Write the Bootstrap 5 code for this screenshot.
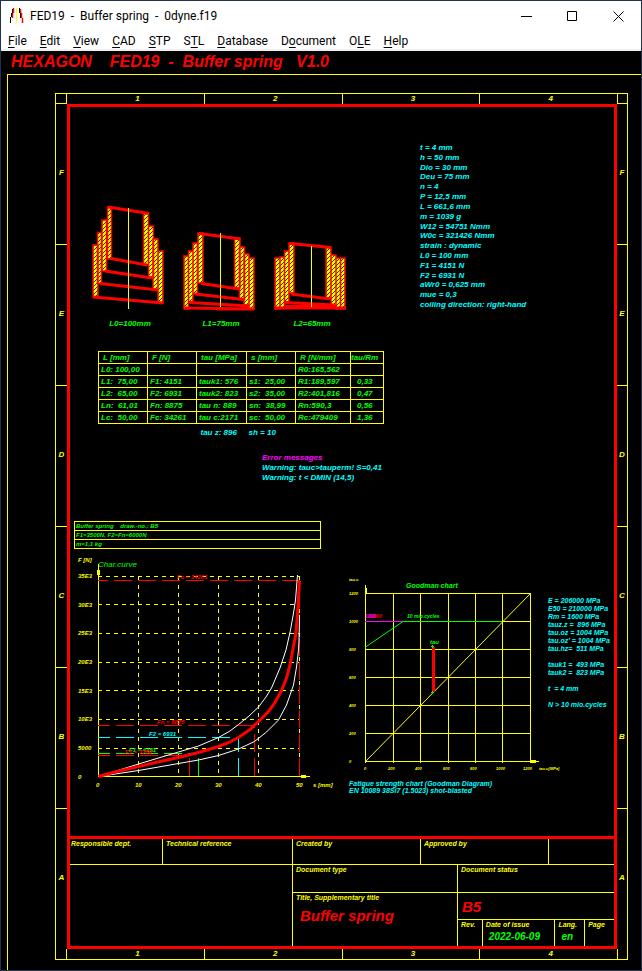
<!DOCTYPE html>
<html lang="en">
<head>
<meta charset="utf-8">
<meta name="viewport" content="width=device-width, initial-scale=1">
<title>FED19 - Buffer spring - 0dyne.f19</title>
<link href="https://cdn.jsdelivr.net/npm/bootstrap@5.3.0/dist/css/bootstrap.min.css" rel="stylesheet">
<style>
  :root { --y: #ff0; --r: #f00; --g: #0f0; --c: #0ff; --m: #f0f; }
  body { background: #000; font-family: "Liberation Sans", Arial, sans-serif; }
  .app-window { border: 1px solid #24314f; min-height: 100vh; }
  .chrome { background: #fff; color: #000; font: 12px/16px Roboto, "Segoe UI", sans-serif; border-bottom: 2px solid #f0f0f0; }
  .titlebar { height: 30px; padding-left: 8px; }
  .app-title { white-space: pre; margin-left: 6px; }
  .win-btn { width: 46px; height: 30px; border: 0; background: none; padding: 0; line-height: 0; }
  .menus { height: 18px; padding: 2px 0 0 7px; gap: 13px; }
  .menus button { border: 0; background: none; padding: 0; color: #000; }
  .menus u { text-underline-offset: 2px; }
  .cad { font-weight: 700; font-style: italic; font-size: 8px; line-height: 10px; color: var(--y); }
  .banner { font-size: 16px; line-height: 22px; color: var(--r); padding-left: 10px; white-space: pre; margin: 0; font-weight: 700; }
  .paper { border: solid var(--y); border-width: 1px 0 0 1px; margin: 1px 0 0 6px; padding: 18px 13px 10px 47px; }
  .sheet { display: grid; grid-template: 10px auto 10px / 11px 1fr 10px; border: 1px solid var(--y); }
  .ruler > div { flex: 1 1 0; display: flex; align-items: center; justify-content: center; }
  .ruler-x > div { padding-left: 4px; }
  .ruler-x > div + div { border-left: 1px solid var(--y); }
  .ruler-y > div { padding-bottom: 2px; }
  .ruler-y > div + div { border-top: 1px solid var(--y); }
  .corner-r { border-right: 1px solid var(--y); }
  .corner-l { border-left: 1px solid var(--y); }
  .plan { border: 3px solid var(--r); }
  .green { color: var(--g); } .cyan { color: var(--c); } .magenta { color: var(--m); }
  .overview { display: grid; grid-template-columns: 350fr 194fr; padding-top: 36px; }
  .springs { gap: 18px; padding: 57px 0 0 22px; }
  .springs figcaption { padding-top: 6px; line-height: 12px; padding-left: 3px; }
  .springs svg { display: block; }
  .params { height: 166px; line-height: 9px; }
  .results { border-collapse: collapse; margin: 21px 0 0 28px; table-layout: fixed; width: 285px; white-space: pre; }
  .results th, .results td { height: 12px; padding: 1px 0 0 2px; line-height: 10px; }
  .results thead th { padding-left: 4px; }
  .results thead th, .results tbody td { border: 1px solid var(--y); }
  .results td.ratio { padding-left: 6px; }
  .messages { margin: 15px 0 0 192px; }
  .notes { border: 1px solid var(--y); width: 247px; margin: 38px 0 0 4px; font-size: 6px; line-height: 8px; }
  .notes li { padding-left: 1px; white-space: pre; }
  .notes li + li { border-top: 1px solid var(--y); }
  .charts { display: grid; grid-template-columns: 273fr 201fr 66fr; padding: 3px 0 42px 4px; }
  .charts svg { display: block; overflow: visible; }
  .charts text { font-size: 6px; fill: var(--y); }
  .charts .tiny text { font-size: 4px; }
  .charts text.t8 { font-size: 8px; font-weight: 400; fill: var(--g); }
  .charts text.t7 { font-size: 7px; fill: var(--g); }
  .charts text.t5 { font-size: 5px; }
  .goodman { padding-top: 23px; font-size: 7px; line-height: 7px; }
  .goodman figcaption { padding-left: 2px; white-space: nowrap; }
  .stress { padding-top: 45px; font-size: 7px; line-height: 8px; white-space: pre; }
  .title-block { border-top: 3px solid var(--r); font-size: 7px; line-height: 8px; }
  .tb-cell { padding: 1px 0 0 3px; white-space: nowrap; }
  .tb-first { padding-left: 1px; }
  .tb-row1 { display: grid; grid-template-columns: 92fr 130fr 128fr 128fr 66fr; height: 26px; border-bottom: 1px solid var(--y); }
  .tb-main { display: grid; grid-template-columns: 222fr 165fr 157fr; grid-template-rows: 28px 53px; }
  .tb-issue { display: grid; grid-template-columns: 24fr 73fr 30fr 30fr; height: 26px; }
  .bl { border-left: 1px solid var(--y); }
  .bb { border-bottom: 1px solid var(--y); }
  .big-red { color: var(--r); font-size: 15px; line-height: 18px; padding: 5px 0 3px 4px; }
  .val { color: var(--g); font-size: 10px; line-height: 12px; padding: 2px 0 0 3px; }
</style>
<script src="https://cdn.jsdelivr.net/npm/bootstrap@5.3.0/dist/js/bootstrap.bundle.min.js"></script>
</head>
<body>
<div class="app-window">
  <header class="chrome">
    <div class="titlebar d-flex align-items-center">
      <svg width="15" height="16" viewBox="0 0 15 16" aria-hidden="true" fill="none">
        <path d="M4.500 0v5M3.500 5v5M11.500 1v4M12.500 5v5M13.500 10v5" stroke="#f00" stroke-width="1.500"/>
        <path d="M3.500 1v4M2.500 5v4M1.500 9v6M10.500 0v5M11.500 5v5" stroke="#000"/>
        <path d="M7.500 0v15" stroke="#ff0"/>
      </svg>
      <span class="app-title">FED19  -  Buffer spring  -  0dyne.f19</span>
      <div class="d-flex ms-auto">
        <button class="win-btn" type="button" aria-label="Minimize"><svg width="11" height="11" stroke="#000" fill="none"><path d="M0 5.500h11"/></svg></button>
        <button class="win-btn" type="button" aria-label="Maximize"><svg width="11" height="11" stroke="#000" fill="none"><path d="M.5.5h9v9h-9z"/></svg></button>
        <button class="win-btn" type="button" aria-label="Close"><svg width="11" height="11" stroke="#000" fill="none"><path d="M.5.5l10 10M10.500.5l-10 10"/></svg></button>
      </div>
    </div>
    <nav class="menus d-flex align-items-center" aria-label="Main menu">
      <button type="button"><u>F</u>ile</button>
      <button type="button"><u>E</u>dit</button>
      <button type="button"><u>V</u>iew</button>
      <button type="button"><u>C</u>AD</button>
      <button type="button"><u>S</u>TP</button>
      <button type="button">S<u>T</u>L</button>
      <button type="button"><u>D</u>atabase</button>
      <button type="button">D<u>o</u>cument</button>
      <button type="button">O<u>L</u>E</button>
      <button type="button"><u>H</u>elp</button>
    </nav>
  </header>

  <main class="cad">
    <h1 class="banner">HEXAGON    FED19  -  Buffer spring   V1.0</h1>
    <div class="paper">
      <div class="sheet">
        <div class="corner-r bb"></div>
        <div class="ruler ruler-x d-flex"><div>1</div><div>2</div><div>3</div><div>4</div></div>
        <div class="corner-l bb"></div>

        <div class="ruler ruler-y d-flex flex-column"><div>F</div><div>E</div><div>D</div><div>C</div><div>B</div><div>A</div></div>

        <div class="plan">
          <section class="overview">
            <div class="springs d-flex align-items-start">
              <figure class="m-0 green">
                <svg width="73" height="112" viewBox="0 0 73 112" role="img" aria-label="Spring, unloaded">
                  <defs>
                    <pattern id="hatch" width="4" height="4" patternUnits="userSpaceOnUse"><rect width="4" height="4" fill="#ff0"/><path d="M0 4L4 0" stroke="#000" stroke-width=".8"/></pattern>
                  </defs>
                  <g fill="url(#hatch)" stroke="#f00" stroke-width="1.500">
                    <path d="M1 45h5v52h-5zM5.500 32.500h4v51h-4zM10 20h4.500v51h-4.500zM15.500 7h4v52h-4z"/>
                    <path d="M51.500 13h5v52h-5zM56.500 26h5v52h-5zM61 39h5v51h-5zM66 51h5v52h-5z"/>
                  </g>
                  <path d="M16 7L57 13.500M19 58.500L55 65M13 71L60 78M8 83.500L66 90M1 97L71 103" stroke="#f00" stroke-width="3"/>
                  <path d="M36.500 8V109" stroke="#ff0"/>
                </svg>
                <figcaption class="text-center">L0=100mm</figcaption>
              </figure>
              <figure class="m-0 green">
                <svg width="73" height="112" viewBox="0 0 73 112" role="img" aria-label="Spring at L1">
                  <g fill="url(#hatch)" stroke="#f00" stroke-width="1.500">
                    <path d="M1 56h4.500v53h-4.500zM5.500 51h4.500v51h-4.500zM10 43h4.500v51h-4.500zM15 33h5v50h-5z"/>
                    <path d="M51.500 38h5.500v50h-5.500zM56.500 47h5v52h-5zM61 54h5v51h-5zM66 58h5v51h-5z"/>
                  </g>
                  <path d="M16 33.500L57.500 39M18 83.500L56 89M12 94L60 99.500M7 102.500L66 106M2 108L71.500 109M34 109H71.500" stroke="#f00" stroke-width="3"/>
                  <path d="M37.500 33V107" stroke="#ff0"/>
                </svg>
                <figcaption class="text-center">L1=75mm</figcaption>
              </figure>
              <figure class="m-0 green">
                <svg width="73" height="112" viewBox="0 0 73 112" role="img" aria-label="Spring at L2">
                  <g fill="url(#hatch)" stroke="#f00" stroke-width="1.500">
                    <path d="M1 58h5v51h-5zM6 57h4.500v51h-4.500zM10.500 51h4.500v51h-4.500zM15 43h5v50h-5z"/>
                    <path d="M52 47h5v51h-5zM57 55h5v50h-5zM62 58h4.500v51h-4.500zM66.500 58h4.500v51h-4.500z"/>
                  </g>
                  <path d="M16 43.500L57 47.500M17 94L56 99M11 102.500L60 105" stroke="#f00" stroke-width="3"/>
                  <path d="M1 108H72M11 106.500H62" stroke="#f00" stroke-width="3"/>
                  <path d="M37.500 46V107" stroke="#ff0"/>
                </svg>
                <figcaption class="text-center">L2=65mm</figcaption>
              </figure>
            </div>
            <ul class="params list-unstyled cyan m-0 d-flex flex-column justify-content-between">
              <li>t = 4 mm</li><li>h = 50 mm</li><li>Dio = 30 mm</li><li>Deu = 75 mm</li><li>n = 4</li><li>P = 12,5 mm</li><li>L = 661,6 mm</li><li>m = 1039 g</li><li>W12 = 54751 Nmm</li><li>W0c = 321426 Nmm</li><li>strain : dynamic</li><li>L0 = 100 mm</li><li>F1 = 4151 N</li><li>F2 = 6931 N</li><li>aWr0 = 0,625 mm</li><li>mue = 0,3</li><li>coiling direction: right-hand</li>
            </ul>
          </section>

          <table class="results green">
            <colgroup><col style="width:49px"><col style="width:49px"><col style="width:50px"><col style="width:49px"><col style="width:55px"><col style="width:33px"></colgroup>
            <thead><tr><th>L [mm]</th><th>F [N]</th><th>tau [MPa]</th><th>s [mm]</th><th>R [N/mm]</th><th class="ps-0">tau/Rm</th></tr></thead>
            <tbody>
              <tr><td>L0: 100,00</td><td></td><td></td><td></td><td>R0:165,562</td><td></td></tr>
              <tr><td>L1:  75,00</td><td>F1: 4151</td><td>tauk1: 576</td><td>s1:  25,00</td><td>R1:189,597</td><td class="ratio">0,33</td></tr>
              <tr><td>L2:  65,00</td><td>F2: 6931</td><td>tauk2: 823</td><td>s2:  35,00</td><td>R2:401,816</td><td class="ratio">0,47</td></tr>
              <tr><td>Ln:  61,01</td><td>Fn: 8875</td><td>tau n: 889</td><td>sn:  38,99</td><td>Rn:590,3</td><td class="ratio">0,56</td></tr>
              <tr><td>Lc:  50,00</td><td>Fc: 34261</td><td>tau c:2171</td><td>sc:  50,00</td><td>Rc:479409</td><td class="ratio">1,36</td></tr>
            </tbody>
            <tfoot class="cyan"><tr><td></td><td></td><td class="pt-1 ps-1">tau z: 896</td><td class="pt-1">sh = 10</td><td></td><td></td></tr></tfoot>
          </table>

          <div class="messages cyan">
            <div class="magenta">Error messages</div>
            <div>Warning: tauc&gt;tauperm! S=0,41</div>
            <div>Warning: t &lt; DMIN (14,5)</div>
          </div>

          <ul class="notes list-unstyled green mb-0">
            <li>Buffer spring    draw.-no.: B5</li>
            <li>F1=3500N, F2=Fn=6000N</li>
            <li>m=1,1 kg</li>
          </ul>

          <section class="charts">
            <svg width="262" height="240" viewBox="74 552 262 240" role="img" aria-label="Characteristic curve">
              <g stroke="#ff0" fill="none">
                <path d="M98.500 564V776.500M98 776.500H310"/>
                <path d="M98.500 570v5M301 776.500h5" stroke-width="3"/>
                <path stroke-dasharray="4 4" d="M98 576.500H300M98 604.500H300M98 633.500H300M98 662.500H300M98 690.500H300M98 719.500H300M98 748.500H300M138.500 577V776M178.500 577V776M218.500 577V776M258.500 577V776M299.500 577V776"/>
              </g>
              <g fill="none" stroke="#f00" stroke-dasharray="18 6">
                <path stroke-dashoffset="8" d="M98 580.500H300"/>
                <path stroke-dashoffset="6" d="M98 725.500H255"/>
                <path stroke-dashoffset="6" d="M98 755.500H190"/>
                <path d="M299.500 776V580M254.500 776V726M189.500 776V757"/>
                <path stroke="#0f0" stroke-dashoffset="6" d="M98 753.500H198"/>
                <path stroke="#0f0" d="M198.500 776V758"/>
                <path stroke="#0ff" stroke-dashoffset="6" d="M98 737.500H238"/>
                <path stroke="#0ff" d="M238.500 776V738"/>
              </g>
              <polyline fill="none" stroke="#fff" points="98.500,776.500 138.500,764 178.500,752 198.500,746 218.500,737.500 230,731 238.500,724.500 249,716 258.500,707 266,697 271.500,688 280,668 286,650 290.500,630 293.500,613 295.500,600 297.500,575"/>
              <polyline fill="none" stroke="#fff" points="98.500,776.500 138.500,770.500 178.500,763.500 198.500,760 218.500,755.500 238.500,749 254.500,741.500 266.500,732 278.500,720 286.500,705 293.500,685 296.500,667 298.500,650 299,640 299.500,615"/>
              <polyline fill="none" stroke="#f00" stroke-width="3" points="98.500,776.500 113,772.500 138.500,766.500 160,761.500 178.500,757.500 198.500,752.500 218.500,746.500 229,742.500 238.500,737.500 250,729.500 258.500,721.500 268.500,711.500 275,702.500 281.500,690.500 286.500,678 290,665 292.500,651.500 296,633 298,607 299.500,581"/>
              <text x="78" y="562">F [N]</text>
              <text class="t8" x="98" y="567">Char.curve</text>
              <text x="78" y="578">35E3</text><text x="78" y="607">30E3</text><text x="78" y="635">25E3</text><text x="78" y="664">20E3</text><text x="78" y="693">15E3</text><text x="78" y="721">10E3</text><text x="78" y="750">5000</text><text x="78" y="779">0</text>
              <text x="96" y="787">0</text><text x="135" y="787">10</text><text x="175" y="787">20</text><text x="215" y="787">30</text><text x="255" y="787">40</text><text x="296" y="787">50</text><text x="313" y="787">s [mm]</text>
              <text style="fill:#f00" x="177" y="579">Fc = 34261</text>
              <text style="fill:#f00" x="157" y="724">Fn = 8875</text>
              <text style="fill:#0ff" x="149" y="736">F2 = 6931</text>
              <text style="fill:#0f0" x="129" y="752">F1 = 4151</text>
              <text style="fill:#f00" x="125" y="754">F1 = 3780</text>
            </svg>
            <figure class="goodman cyan m-0">
              <svg width="201" height="205" viewBox="347 575 201 205" role="img" aria-label="Goodman chart">
                <g stroke="#ff0" fill="none">
                  <path d="M365.500 585V763M393.500 593V763M420.500 593V763M448.500 593V763M475.500 593V763M502.500 593V763M530.500 593V763"/>
                  <path d="M365 593.500H531M365 621.500H531M365 649.500H531M365 677.500H531M365 705.500H531M365 733.500H531M365 761.500H539"/>
                  <path d="M531 761.500h5" stroke-width="3"/><path d="M366.500 588v5"/>
                  <path d="M365.500 761.500L530.500 593.500"/>
                </g>
                <path d="M365 621.500H403" stroke="#f0f"/>
                <path d="M365.500 647L403 621.500H502" stroke="#0f0" fill="none"/>
                <path d="M433.500 647V692" stroke="#f00" stroke-width="3"/>
                <path d="M431 646.500h3M432.500 645v3M431 692.500h3M432.500 691v3" stroke="#0f0"/>
                <text class="t7" x="406" y="588">Goodman chart</text>
                <text class="t5" style="fill:#0f0" x="407" y="618">10 mio.cycles</text>
                <text class="t5" style="fill:#f00" x="368" y="618">10000</text>
                <text class="t5" style="fill:#f0f" x="365" y="618">1000</text>
                <text style="fill:#0f0" x="430" y="644">tau</text>
                <g class="tiny">
                  <text x="349" y="581">tau.o</text>
                  <text x="349" y="595">1200</text><text x="349" y="623">1000</text><text x="349" y="651">800</text><text x="349" y="679">600</text><text x="349" y="707">400</text><text x="349" y="735">200</text><text x="349" y="763">0</text>
                  <text x="364" y="770">0</text><text x="388" y="770">200</text><text x="415" y="770">400</text><text x="443" y="770">600</text><text x="470" y="770">800</text><text x="496" y="770">1000</text><text x="523" y="770">1200</text><text x="539" y="770">tau.u[MPa]</text>
                </g>
              </svg>
              <figcaption>Fatigue strength chart (Goodman Diagram)<br>EN 10089 38Si7 (1.5023) shot-blasted</figcaption>
            </figure>
            <div class="stress cyan">E = 206000 MPa
E50 = 210000 MPa
Rm = 1600 MPa
tauz.z =  896 MPa
tau.oz = 1004 MPa
tau.oz' = 1004 MPa
tau.hz=  511 MPa

tauk1 =  493 MPa
tauk2 =  823 MPa

t  = 4 mm

N &gt; 10 mio.cycles</div>
          </section>

          <section class="title-block">
            <div class="tb-row1">
              <div class="tb-cell tb-first">Responsible dept.</div>
              <div class="tb-cell bl">Technical reference</div>
              <div class="tb-cell bl">Created by</div>
              <div class="tb-cell bl">Approved by</div>
              <div class="bl"></div>
            </div>
            <div class="tb-main">
              <div></div>
              <div class="tb-cell bl bb">Document type</div>
              <div class="tb-cell bl bb">Document status</div>
              <div></div>
              <div class="tb-cell bl">Title, Supplementary title<div class="big-red">Buffer spring</div></div>
              <div class="bl">
                <div class="bb big-red">B5</div>
                <div class="tb-issue">
                  <div class="tb-cell">Rev.</div>
                  <div class="tb-cell bl">Date of issue<div class="val">2022-06-09</div></div>
                  <div class="tb-cell bl">Lang.<div class="val">en</div></div>
                  <div class="tb-cell bl">Page</div>
                </div>
              </div>
            </div>
          </section>
        </div>

        <div class="ruler ruler-y d-flex flex-column"><div>F</div><div>E</div><div>D</div><div>C</div><div>B</div><div>A</div></div>

        <div class="corner-r"></div>
        <div class="ruler ruler-x d-flex"><div>1</div><div>2</div><div>3</div><div>4</div></div>
        <div class="corner-l"></div>
      </div>
    </div>
  </main>
</div>
</body>
</html>
